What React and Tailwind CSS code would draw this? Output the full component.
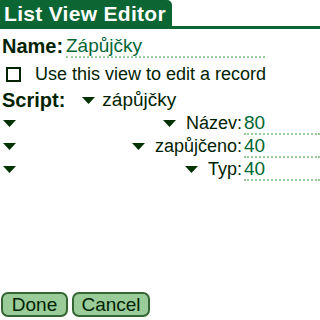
import React from 'react';

/**
 * Petit triangle de liste déroulante (style Palm OS)
 */
function Arrow({ className = '' }) {
  return (
    <svg width="13" height="7" viewBox="0 0 13 7" className={`shrink-0 ${className}`}>
      <path d="M0 0H13L6.5 7Z" fill="#003300" />
    </svg>
  );
}

function Field({ value, width }) {
  return (
    <span
      className={`${width} h-[23px] border-b-2 border-dotted border-[#99cc99] text-[#006633] leading-[22px] text-[19px]`}
    >
      {value}
    </span>
  );
}

function ColumnRow({ label, value }) {
  return (
    <div className="flex items-center h-[23px]">
      <Arrow className="ml-[3px]" />
      <div className="flex-1 flex items-center justify-end gap-[10px] pr-[2px]">
        <Arrow />
        <span>{label}</span>
      </div>
      <Field value={value} width="w-[76px]" />
    </div>
  );
}

export default function App() {
  return (
    <div
      className="w-[320px] h-[320px] bg-white text-[#002200] text-[18px] flex flex-col overflow-hidden"
      style={{ fontFamily: '"Liberation Sans", "DejaVu Sans", sans-serif' }}
    >
      {/* Barre de titre */}
      <div className="flex items-end border-b-[3px] border-[#0b6633]">
        <div className="h-[26px] w-[172px] bg-[#0b6633] rounded-tr-[5px] text-white font-bold text-[21px] tracking-[0.3px] leading-[27px] pl-[4px]">
          List View Editor
        </div>
      </div>

      {/* Nom */}
      <div className="flex items-center h-[26px] mt-[4px]">
        <span className="font-bold text-[20px] pl-[2px] w-[66px]">Name:</span>
        <Field value="Zápůjčky" width="w-[199px]" />
      </div>

      {/* Case à cocher */}
      <div className="flex items-center h-[24px] mt-[3px]">
        <span className="block shrink-0 ml-[6px] w-[15px] h-[15px] border-2 border-[#002200]" />
        <span className="ml-[14px]">Use this view to edit a record</span>
      </div>

      {/* Script */}
      <div className="flex items-center h-[22px] mt-[3px]">
        <span className="font-bold text-[20px] pl-[2px]">Script:</span>
        <Arrow className="ml-[17px]" />
        <span className="ml-[7px] text-[19px]">zápůjčky</span>
      </div>

      {/* Colonnes */}
      <div className="flex flex-col mt-[1px]">
        <ColumnRow label="Název:" value="80" />
        <ColumnRow label="zapůjčeno:" value="40" />
        <ColumnRow label="Typ:" value="40" />
      </div>

      {/* Boutons */}
      <div className="mt-auto mb-[3px] flex gap-[4px] pl-[1px]">
        <button className="w-[67px] h-[25px] bg-[#99cc99] border-2 border-[#336633] rounded-[7px] text-[#002200] text-[19px] leading-[21px]">
          Done
        </button>
        <button className="w-[78px] h-[25px] bg-[#99cc99] border-2 border-[#336633] rounded-[7px] text-[#002200] text-[19px] leading-[21px]">
          Cancel
        </button>
      </div>
    </div>
  );
}
